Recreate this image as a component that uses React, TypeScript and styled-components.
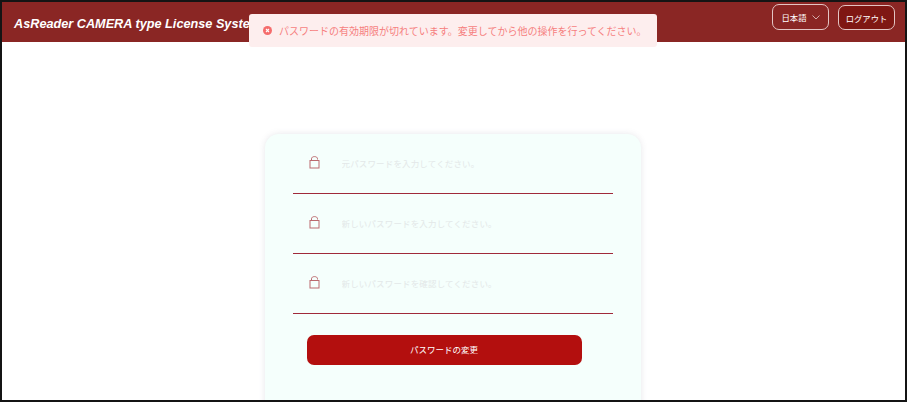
import React from 'react';
import styled, { createGlobalStyle } from 'styled-components';

const GlobalStyle = createGlobalStyle`
  html, body {
    margin: 0;
    padding: 0;
    background: #fff;
    font-family: "Liberation Sans", "Noto Sans CJK JP", sans-serif;
  }
`;

const Frame = styled.div`
  position: relative;
  box-sizing: border-box;
  width: 907px;
  height: 402px;
  border: 2px solid #141414;
  overflow: hidden;
  background: #fff;
`;

const Header = styled.header`
  display: flex;
  align-items: flex-start;
  justify-content: space-between;
  box-sizing: border-box;
  height: 40px;
  padding: 2px 10px 0 12px;
  background: #8a2624;
`;

const Title = styled.h1`
  margin: 12px 0 0;
  font-size: 12.7px;
  line-height: 16px;
  font-weight: 700;
  font-style: italic;
  color: #fff;
  white-space: nowrap;
`;

const HeaderActions = styled.div`
  display: flex;
  align-items: flex-start;
  gap: 9px;
`;

const LangButton = styled.button`
  display: flex;
  align-items: center;
  justify-content: center;
  gap: 5px;
  box-sizing: border-box;
  width: 57px;
  height: 26px;
  padding: 0;
  background: transparent;
  border: 1px solid #e3c5c4;
  border-radius: 7px;
  color: #fff;
  font-family: inherit;
  font-size: 8.4px;
`;

const LogoutButton = styled.button`
  box-sizing: border-box;
  width: 57px;
  height: 25px;
  margin-top: 1px;
  padding: 0;
  background: #7f1713;
  border: 1px solid #e3c5c4;
  border-radius: 7px;
  color: #fff;
  font-family: inherit;
  font-size: 8.3px;
`;

const Toast = styled.div`
  position: absolute;
  top: 12px;
  left: 247px;
  display: flex;
  align-items: center;
  gap: 7px;
  box-sizing: border-box;
  width: 408px;
  height: 33px;
  padding-left: 14px;
  background: #fdeeee;
  border-radius: 3px;
  color: #f67f7f;
  font-size: 10px;
  white-space: nowrap;
`;

const Main = styled.main`
  display: flex;
  justify-content: center;
  padding: 92px 2px 0 0;
`;

const Card = styled.form`
  box-sizing: border-box;
  width: 376px;
  height: 300px;
  padding: 0 28px;
  background: #f5fffc;
  border-radius: 14px;
  box-shadow: 0 0 6px rgba(120, 120, 140, 0.18);
`;

const Field = styled.label`
  display: flex;
  align-items: flex-start;
  gap: 22px;
  box-sizing: border-box;
  height: 60px;
  padding: 22px 0 0 16px;
  border-bottom: 1px solid #a02a3a;
`;

const LockIcon = styled.svg`
  flex: none;
  width: 11px;
  height: 13px;
  color: #bb6a6e;
`;

const Input = styled.input`
  flex: 1;
  min-width: 0;
  height: 14px;
  margin-top: 1px;
  padding: 0;
  border: none;
  outline: none;
  background: transparent;
  font-family: inherit;
  font-size: 8.5px;
  letter-spacing: 0.15px;

  &::placeholder {
    color: #e3e8e8;
    opacity: 1;
  }
`;

const SubmitButton = styled.button`
  display: block;
  box-sizing: border-box;
  width: 275px;
  height: 30px;
  margin: 21px 0 0 14px;
  padding: 0 0 2px;
  background: #b30f0e;
  border: none;
  border-radius: 7px;
  color: #fff;
  font-family: inherit;
  font-size: 8.5px;
`;

const Lock = () => (
  <LockIcon viewBox="0 0 11 13" fill="none" stroke="currentColor" strokeWidth="1">
    <path d="M2.5 4.5V2.8C2.5 1.4 3.8 0.6 5.5 0.6S8.5 1.4 8.5 2.8V3.5" />
    <rect x="1" y="4.5" width="9" height="7.5" />
  </LockIcon>
);

const placeholders = [
  '元パスワードを入力してください。',
  '新しいパスワードを入力してください。',
  '新しいパスワードを確認してください。',
];

export default function App() {
  return (
    <Frame>
      <GlobalStyle />
      <Header>
        <Title>AsReader CAMERA type License System</Title>
        <HeaderActions>
          <LangButton type="button">
            日本語
            <svg width="8" height="5" viewBox="0 0 8 5" fill="none" stroke="#e9cfcf" strokeWidth="0.8">
              <path d="M0.5 0.5L4 4L7.5 0.5" />
            </svg>
          </LangButton>
          <LogoutButton type="button">ログアウト</LogoutButton>
        </HeaderActions>
      </Header>
      <Toast>
        <svg width="9" height="9" viewBox="0 0 9 9">
          <circle cx="4.5" cy="4.5" r="4.5" fill="#f56c6c" />
          <path d="M3 3L6 6M6 3L3 6" stroke="#ffffff" strokeWidth="1.1" />
        </svg>
        パスワードの有効期限が切れています。変更してから他の操作を行ってください。
      </Toast>
      <Main>
        <Card>
          {placeholders.map((text) => (
            <Field key={text}>
              <Lock />
              <Input type="password" placeholder={text} />
            </Field>
          ))}
          <SubmitButton type="button">パスワードの変更</SubmitButton>
        </Card>
      </Main>
    </Frame>
  );
}
